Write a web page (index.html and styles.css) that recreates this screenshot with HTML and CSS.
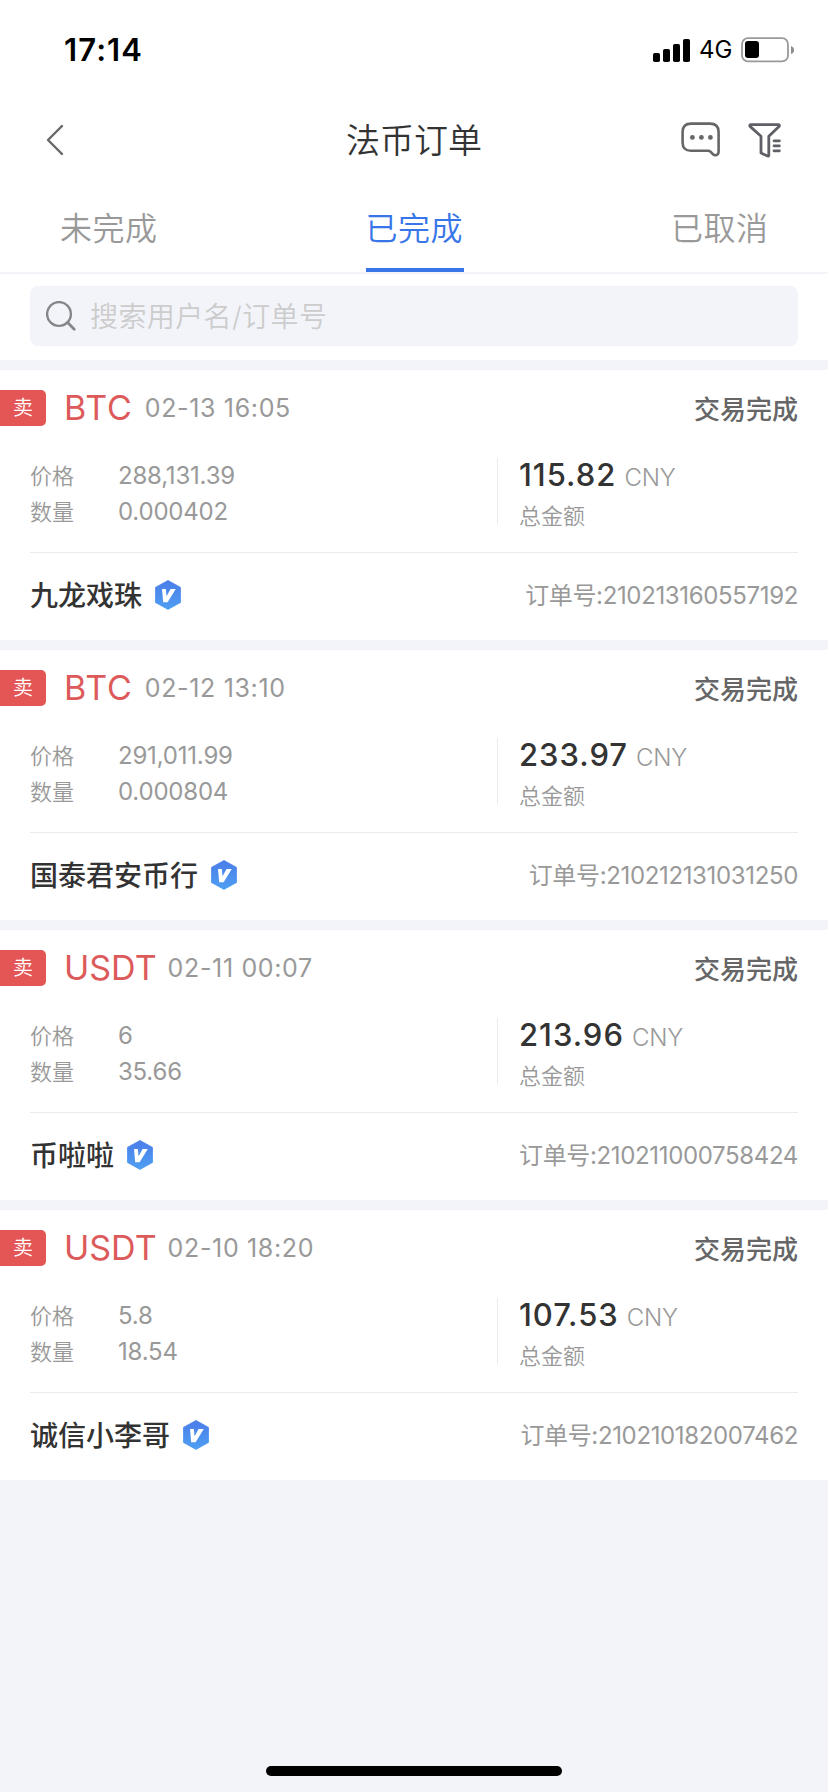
FILE: index.html
```html
<!DOCTYPE html>
<html lang="zh-CN">
<head>
<meta charset="utf-8">
<title>法币订单</title>
<link rel="stylesheet" href="styles.css">
</head>
<body>
<svg class="defs" width="0" height="0" aria-hidden="true">
  <defs>
    <linearGradient id="hex" x1="0" y1="0" x2="0" y2="1"><stop offset="0" stop-color="#4b7ce9"/><stop offset="1" stop-color="#4e9ff2"/></linearGradient>
    <symbol id="verified" viewBox="0 0 26 30">
      <path d="M13 .5 25.6 7.4V22.4L13 29.4.4 22.4V7.4Z" fill="url(#hex)" stroke="url(#hex)" stroke-width=".8" stroke-linejoin="round"/>
      <path d="M7 9H10.8L11.6 16.2 15.6 9H20.8L12.6 22.2H8.2Z" fill="#fff"/>
    </symbol>
  </defs>
</svg>
<div class="screen">
  <div class="status">
    <span class="clock">17:14</span>
    <svg class="signal" viewBox="0 0 37 23"><rect y="14" width="7" height="9" rx="1.8"/><rect x="10" y="10" width="7" height="13" rx="1.8"/><rect x="20" y="5" width="7" height="18" rx="1.8"/><rect x="30" width="7" height="23" rx="1.8"/></svg>
    <span class="network">4G</span>
    <svg class="battery" viewBox="0 0 53 26"><rect x="1" y="1.2" width="46" height="23.2" rx="6" fill="none" stroke="#999" stroke-width="1.8"/><rect x="4" y="4" width="14" height="17" rx="3"/><path d="M50 9q3 1 3 4t-3 4z" fill="#8c8c8c"/></svg>
  </div>
  <header class="header">
    <svg class="back" viewBox="0 0 18 32"><path d="M16 2 2 16 16 30" fill="none" stroke="#666" stroke-width="2.4" stroke-linecap="round" stroke-linejoin="round"/></svg>
    <h1 class="title">法币订单</h1>
    <svg class="chat" viewBox="0 0 40 36"><path d="M10 1.6H29Q37.6 1.6 37.6 10V29.5C37.6 33.5 34 34 32 32.2L29.5 29.6Q28.6 28.8 27 28.8H10Q1.6 28.8 1.6 20.4V10Q1.6 1.6 10 1.6Z" fill="none" stroke="#666" stroke-width="2.6"/><g fill="#666"><circle cx="11.4" cy="15.4" r="2.4"/><circle cx="20.4" cy="15.4" r="2.4"/><circle cx="29.4" cy="15.4" r="2.4"/></g></svg>
    <svg class="filter" viewBox="0 0 34 36"><path d="M2.8 2.6H30.6Q32 3 31 4.4L20.8 14.2V33.2Q20.8 34.4 19.6 34L13 31V14.2L2 4.4Q1.2 3 2.8 2.6Z" fill="none" stroke="#5f6065" stroke-width="2.8" stroke-linejoin="round"/><path d="M26 18.8H31.4M26 23.8H31.4M26 28.8H31.4" stroke="#5f6065" stroke-width="2.8" stroke-linecap="round"/></svg>
  </header>
  <nav class="tabs">
    <span class="tab">未完成</span>
    <span class="tab active">已完成</span>
    <span class="tab">已取消</span>
  </nav>
  <div class="search-wrap">
    <div class="search">
      <svg class="glass" viewBox="0 0 30 30"><circle cx="13" cy="13" r="11.9" fill="none" stroke="#85868a" stroke-width="2.4"/><path d="M21.6 21.6 28.2 28.2" stroke="#85868a" stroke-width="2.8" stroke-linecap="round"/></svg>
      <span class="placeholder">搜索用户名/订单号</span>
    </div>
  </div>
  <main class="orders">
    <article class="order">
      <div class="top"><span class="side">卖</span><span class="coin btc">BTC</span><time class="time">02-13 16:05</time><span class="state">交易完成</span></div>
      <div class="detail">
        <dl class="facts"><dt>价格</dt><dd>288,131.39</dd><dt>数量</dt><dd>0.000402</dd></dl>
        <div class="total"><div class="sum"><b class="amount">115.82</b><span class="unit">CNY</span></div><div class="caption">总金额</div></div>
      </div>
      <div class="foot"><span class="name">九龙戏珠</span><svg class="badge"><use href="#verified"/></svg><span class="number">订单号:210213160557192</span></div>
    </article>
    <article class="order">
      <div class="top"><span class="side">卖</span><span class="coin btc">BTC</span><time class="time">02-12 13:10</time><span class="state">交易完成</span></div>
      <div class="detail">
        <dl class="facts"><dt>价格</dt><dd>291,011.99</dd><dt>数量</dt><dd>0.000804</dd></dl>
        <div class="total"><div class="sum"><b class="amount">233.97</b><span class="unit">CNY</span></div><div class="caption">总金额</div></div>
      </div>
      <div class="foot"><span class="name">国泰君安币行</span><svg class="badge"><use href="#verified"/></svg><span class="number">订单号:210212131031250</span></div>
    </article>
    <article class="order">
      <div class="top"><span class="side">卖</span><span class="coin">USDT</span><time class="time">02-11 00:07</time><span class="state">交易完成</span></div>
      <div class="detail">
        <dl class="facts"><dt>价格</dt><dd>6</dd><dt>数量</dt><dd>35.66</dd></dl>
        <div class="total"><div class="sum"><b class="amount">213.96</b><span class="unit">CNY</span></div><div class="caption">总金额</div></div>
      </div>
      <div class="foot"><span class="name">币啦啦</span><svg class="badge"><use href="#verified"/></svg><span class="number">订单号:210211000758424</span></div>
    </article>
    <article class="order">
      <div class="top"><span class="side">卖</span><span class="coin">USDT</span><time class="time">02-10 18:20</time><span class="state">交易完成</span></div>
      <div class="detail">
        <dl class="facts"><dt>价格</dt><dd>5.8</dd><dt>数量</dt><dd>18.54</dd></dl>
        <div class="total"><div class="sum"><b class="amount">107.53</b><span class="unit">CNY</span></div><div class="caption">总金额</div></div>
      </div>
      <div class="foot"><span class="name">诚信小李哥</span><svg class="badge"><use href="#verified"/></svg><span class="number">订单号:210210182007462</span></div>
    </article>
  </main>
  <div class="home"></div>
</div>
</body>
</html>
```
FILE: styles.css
```css
* { box-sizing: border-box; }
body {
  margin: 0;
  background: #f3f4fa;
  color: #333;
  font-family: Inter, "Noto Sans CJK SC", sans-serif;
  font-weight: 350;
}
svg { display: block; flex: none; }
.defs { position: absolute; }
.screen {
  width: 828px;
  height: 1792px;
  display: flex;
  flex-direction: column;
}

.status {
  height: 100px;
  background: #fff;
  display: flex;
  align-items: center;
  padding: 0 34px 0 64px;
  color: #000;
}
.clock { font-size: 31px; font-weight: 600; line-height: 40px; letter-spacing: 1.1px; margin-right: auto; }
.signal { width: 37px; height: 23px; }
.network { width: 51px; padding-left: 9px; font-size: 24px; font-weight: 400; line-height: 40px; }
.battery { width: 53px; height: 26px; }

.header {
  height: 80px;
  background: #fff;
  display: flex;
  align-items: center;
  padding: 0 46px;
}
.back { width: 18px; height: 32px; margin-right: 282px; }
.title { margin: 0 auto 0 0; padding-top: 2px; font-size: 34px; line-height: 48px; font-weight: 350; }
.chat { width: 40px; height: 36px; margin-right: 27px; }
.filter { width: 34px; height: 36px; }

.tabs {
  height: 94px;
  background: #fff;
  border-bottom: 2px solid #f3f4fa;
  display: flex;
  justify-content: space-between;
  padding: 0 59px 0 60px;
}
.tab {
  width: 98px;
  height: 92px;
  padding-top: 25px;
  font-size: 32px;
  line-height: 48px;
  letter-spacing: .5px;
  white-space: nowrap;
  color: #999;
}
.active { color: #3775e8; border-bottom: 4px solid #3775e8; }

.search-wrap { height: 86px; padding: 12px 30px 14px; background: #fff; }
.search {
  height: 60px;
  border-radius: 8px;
  background: #f3f4fa;
  display: flex;
  align-items: center;
  padding-left: 16px;
  gap: 14px;
}
.glass { width: 30px; height: 30px; }
.placeholder { padding-top: 2px; font-size: 28px; line-height: 40px; letter-spacing: .4px; color: #ccc; }

.orders { display: flex; flex-direction: column; gap: 10px; padding-top: 10px; }
.order { height: 270px; background: #fff; }
.top { height: 76px; display: flex; align-items: center; padding-right: 30px; }
.side {
  width: 46px;
  height: 36px;
  padding-left: 13px;
  border-radius: 0 5px 5px 0;
  background: #e45656;
  color: #fff;
  font-size: 20px;
  line-height: 37px;
}
.coin { margin-left: 18px; margin-right: 11px; font-size: 34px; line-height: 40px; font-weight: 400; color: #dc5a5a; }
.btc { margin-right: 12px; letter-spacing: .9px; }
.time { font-size: 25px; line-height: 36px; font-weight: 400; letter-spacing: .65px; color: #999; }
.state { margin-left: auto; padding-top: 3px; font-size: 26px; line-height: 36px; font-weight: 500; color: #666; }

.detail {
  height: 107px;
  margin: 0 30px;
  border-bottom: 1px solid #ebebee;
  display: flex;
  padding-top: 12px;
}
.facts {
  width: 467px;
  height: 72px;
  margin: 0;
  display: grid;
  grid-template-columns: 88px 1fr;
  grid-auto-rows: 36px;
  align-items: center;
  color: #999;
}
.facts dt { font-size: 22px; line-height: 36px; }
.facts dd { margin: 0; font-size: 24px; line-height: 36px; font-weight: 400; letter-spacing: -.2px; }
.total { height: 66px; border-left: 1px solid #ebebee; padding-left: 21px; }
.sum { height: 35px; display: flex; align-items: baseline; gap: 8px; }
.amount { font-size: 31px; line-height: 34px; font-weight: 500; letter-spacing: 1px; }
.unit { font-size: 24px; line-height: 34px; color: #999; letter-spacing: -.2px; }
.caption { font-size: 22px; line-height: 36px; padding-top: 5px; color: #999; }

.foot { height: 86px; display: flex; align-items: center; padding: 0 30px; }
.name { font-size: 28px; line-height: 40px; font-weight: 500; }
.badge { width: 26px; height: 30px; margin-left: 13px; margin-bottom: 2px; }
.number { margin-left: auto; font-size: 24px; line-height: 34px; padding-bottom: 1px; font-weight: 400; color: #999; letter-spacing: -.35px; }

.home {
  width: 296px;
  height: 10px;
  margin: auto auto 16px;
  border-radius: 5px;
  background: #000;
}
```
